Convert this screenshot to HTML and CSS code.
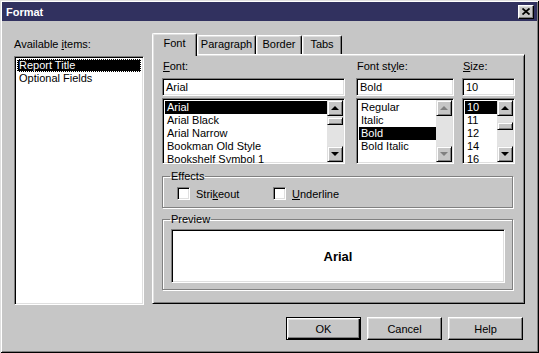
FILE: index.html
```html
<!DOCTYPE html>
<html lang="en">
<head>
  <meta charset="UTF-8" />
  <title>Format</title>
  <link rel="stylesheet" href="styles.css">
</head>
<body>
  <div class="window">
    <div class="titlebar">
      <span class="title">Format</span>
      <button class="close-btn">
        <svg width="8" height="7" viewBox="0 0 8 7"><path d="M0.5,0.5 L7.5,6.5 M7.5,0.5 L0.5,6.5" stroke="#000" stroke-width="1.8"/></svg>
      </button>
    </div>

    <div class="client">
      <!-- left list -->
      <div class="items-col">
        <div class="caption">Available <u>i</u>tems:</div>
        <div class="listbox sunken">
          <div class="item selected focus">Report Title</div>
          <div class="item">Optional Fields</div>
        </div>
      </div>

      <!-- tabs -->
      <div class="tabs-col">
        <div class="tab-row">
          <div class="tab active tab-font">Font</div>
          <div class="tab tab-para">Paragraph</div>
          <div class="tab tab-border">Border</div>
          <div class="tab tab-tabs">Tabs</div>
        </div>

        <div class="tab-panel">
          <div class="font-row">
            <div class="col col-font">
              <div class="field-label"><u>F</u>ont:</div>
              <div class="input sunken">Arial</div>
              <div class="list sunken">
                <div class="list-items">
                  <div class="item selected">Arial</div>
                  <div class="item">Arial Black</div>
                  <div class="item">Arial Narrow</div>
                  <div class="item">Bookman Old Style</div>
                  <div class="item">Bookshelf Symbol 1</div>
                </div>
                <div class="scrollbar">
                  <div class="sb-btn"><span class="arrow up"></span></div>
                  <div class="sb-thumb thumb-font"></div>
                  <div class="sb-track"></div>
                  <div class="sb-btn"><span class="arrow down"></span></div>
                </div>
              </div>
            </div>

            <div class="col col-style">
              <div class="field-label">Font st<u>y</u>le:</div>
              <div class="input sunken">Bold</div>
              <div class="list sunken">
                <div class="list-items">
                  <div class="item">Regular</div>
                  <div class="item">Italic</div>
                  <div class="item selected">Bold</div>
                  <div class="item">Bold Italic</div>
                </div>
                <div class="scrollbar">
                  <div class="sb-btn"><span class="arrow up disabled"></span></div>
                  <div class="sb-track"></div>
                  <div class="sb-btn"><span class="arrow down disabled"></span></div>
                </div>
              </div>
            </div>

            <div class="col col-size">
              <div class="field-label"><u>S</u>ize:</div>
              <div class="input sunken">10</div>
              <div class="list sunken">
                <div class="list-items">
                  <div class="item selected">10</div>
                  <div class="item">11</div>
                  <div class="item">12</div>
                  <div class="item">14</div>
                  <div class="item">16</div>
                </div>
                <div class="scrollbar">
                  <div class="sb-btn"><span class="arrow up"></span></div>
                  <div class="sb-thumb thumb-size"></div>
                  <div class="sb-track"></div>
                  <div class="sb-btn"><span class="arrow down"></span></div>
                </div>
              </div>
            </div>
          </div>

          <fieldset class="group effects">
            <legend>Effects</legend>
            <div class="checks">
              <label class="check check-strike"><span class="box sunken"></span>Stri<u>k</u>eout</label>
              <label class="check"><span class="box sunken"></span><u>U</u>nderline</label>
            </div>
          </fieldset>

          <fieldset class="group preview">
            <legend>Preview</legend>
            <div class="preview-box sunken">Arial</div>
          </fieldset>
        </div>
      </div>
    </div>

    <div class="button-row">
      <button class="btn default">OK</button>
      <button class="btn">Cancel</button>
      <button class="btn">Help</button>
    </div>
  </div>
</body>
</html>
```

FILE: styles.css
```css
body {
  margin: 0;
  background: #c6c6c6;
  font-family: "Liberation Sans", Arial, sans-serif;
  font-size: 11px;
  color: #000;
}

u { text-decoration: underline; text-underline-offset: 1px; }

/* window frame */
.window {
  width: 539px;
  height: 353px;
  box-sizing: border-box;
  background: #c6c6c6;
  box-shadow: inset 1px 1px #dfdfdf, inset -1px -1px #000,
              inset 2px 2px #fff, inset -2px -2px #808080;
  padding-top: 2px;
}

.titlebar {
  height: 19px;
  margin: 0 2px;
  background: #31315f;
  display: flex;
  align-items: center;
  justify-content: space-between;
  padding: 0 3px 0 4px;
}
.title {
  color: #fff;
  font-weight: bold;
  font-size: 11px;
}
.close-btn {
  width: 16px;
  height: 14px;
  padding: 0;
  background: #c6c6c6;
  border: 1px solid;
  border-color: #fff #000 #000 #fff;
  box-shadow: inset -1px -1px #808080, inset 1px 1px #dfdfdf;
  display: flex;
  align-items: center;
  justify-content: center;
}

/* 3d borders */
.sunken {
  box-sizing: border-box;
  border: 1px solid;
  border-color: #808080 #fff #fff #808080;
  box-shadow: inset 1px 1px #000, inset -1px -1px #dfdfdf;
  background: #fff;
}

/* client area */
.client {
  display: flex;
  padding: 12px 0 0 14px;
  gap: 8px;
}
.items-col { width: 130px; }
.caption {
  height: 23px;
  box-sizing: border-box;
  padding-top: 5px;
  line-height: 13px;
}
.listbox {
  height: 249px;
  padding: 2px;
}
.item {
  height: 13px;
  line-height: 13px;
  padding-left: 2px;
  white-space: nowrap;
}
.item.selected {
  background: #000;
  color: #fff;
}
.item.focus {
  outline: 1px dotted #fff;
  outline-offset: -1px;
}

/* tabs */
.tabs-col { width: 373px; }
.tab-row {
  display: flex;
  align-items: flex-end;
  height: 23px;
  margin-bottom: -2px;
}
.tab {
  box-sizing: border-box;
  height: 19px;
  margin-bottom: 2px;
  text-align: center;
  line-height: 16px;
  border-top: 1px solid #fff;
  border-left: 1px solid #fff;
  border-right: 1px solid #000;
  box-shadow: inset -1px 0 #808080, inset 1px 1px #dfdfdf;
  border-radius: 2px 2px 0 0;
  font-size: 11px;
}
.tab.active {
  position: relative;
  z-index: 1;
  height: 23px;
  margin-bottom: 0;
  line-height: 18px;
  background: #c6c6c6;
}
.tab-font { width: 45px; }
.tab-para { width: 59px; }
.tab-border { width: 46px; }
.tab-tabs { width: 40px; }

.tab-panel {
  box-sizing: border-box;
  height: 250px;
  border: 1px solid;
  border-color: #fff #000 #000 #fff;
  box-shadow: inset 1px 1px #dfdfdf, inset -1px -1px #808080;
  padding: 5px 9px 0 9px;
}

.font-row { display: flex; }
.col-font { width: 183px; margin-right: 11px; }
.col-style { width: 98px; margin-right: 8px; }
.col-size { width: 53px; }
.field-label {
  height: 13px;
  line-height: 13px;
  margin-bottom: 5px;
  padding-left: 1px;
}
.input {
  height: 18px;
  line-height: 16px;
  padding-left: 3px;
  margin-bottom: 2px;
}
.list {
  height: 66px;
  padding: 2px;
  display: flex;
  overflow: hidden;
}
.list-items { flex: 1; min-width: 0; }

/* scrollbar */
.scrollbar {
  width: 16px;
  display: flex;
  flex-direction: column;
  background: #e3e3e3;
  margin: -1px -1px -1px 0;
}
.sb-track { flex: 1; }
.sb-btn, .sb-thumb {
  box-sizing: border-box;
  width: 16px;
  background: #c6c6c6;
  border: 1px solid;
  border-color: #dfdfdf #000 #000 #dfdfdf;
  box-shadow: inset 1px 1px #fff, inset -1px -1px #808080;
}
.sb-btn {
  height: 16px;
  display: flex;
  align-items: center;
  justify-content: center;
}
.sb-thumb { height: 8px; }
.thumb-font { margin-top: 1px; }
.thumb-size { margin-top: 6px; }
.arrow {
  width: 0;
  height: 0;
  border-left: 4px solid transparent;
  border-right: 4px solid transparent;
}
.arrow.up { border-bottom: 4px solid #000; }
.arrow.down { border-top: 4px solid #000; }
.arrow.up.disabled { border-bottom-color: #808080; }
.arrow.down.disabled { border-top-color: #808080; }

/* group boxes */
.group {
  margin: 6px 0 0;
  padding: 0;
  min-width: 0;
  border: 1px solid #808080;
  box-shadow: inset 1px 1px #fff, 1px 1px #fff;
  width: 351px;
  box-sizing: border-box;
}
.group legend {
  padding: 0 1px;
  margin-left: 7px;
  line-height: 13px;
}
.checks {
  display: flex;
  padding: 4px 0 7px 14px;
}
.check {
  display: flex;
  align-items: center;
  height: 13px;
}
.check-strike { width: 96px; }
.box {
  width: 13px;
  height: 13px;
  margin-right: 6px;
}
.preview { margin-top: 5px; }
.preview-box {
  margin: 3px 7px 6px 8px;
  height: 54px;
  display: flex;
  align-items: center;
  justify-content: center;
  font-weight: bold;
  font-size: 13px;
}

/* dialog buttons */
.button-row {
  display: flex;
  justify-content: flex-end;
  gap: 6px;
  padding: 12px 16px 0 0;
}
.btn {
  box-sizing: border-box;
  width: 75px;
  height: 23px;
  padding: 0;
  font-family: inherit;
  font-size: 11px;
  background: #c6c6c6;
  border: 1px solid;
  border-color: #fff #000 #000 #fff;
  box-shadow: inset -1px -1px #808080, inset 1px 1px #dfdfdf;
}
.btn.default {
  border: 1px solid #000;
  box-shadow: inset 1px 1px #fff, inset -1px -1px #000,
              inset -2px -2px #808080, inset 2px 2px #dfdfdf;
}
```
